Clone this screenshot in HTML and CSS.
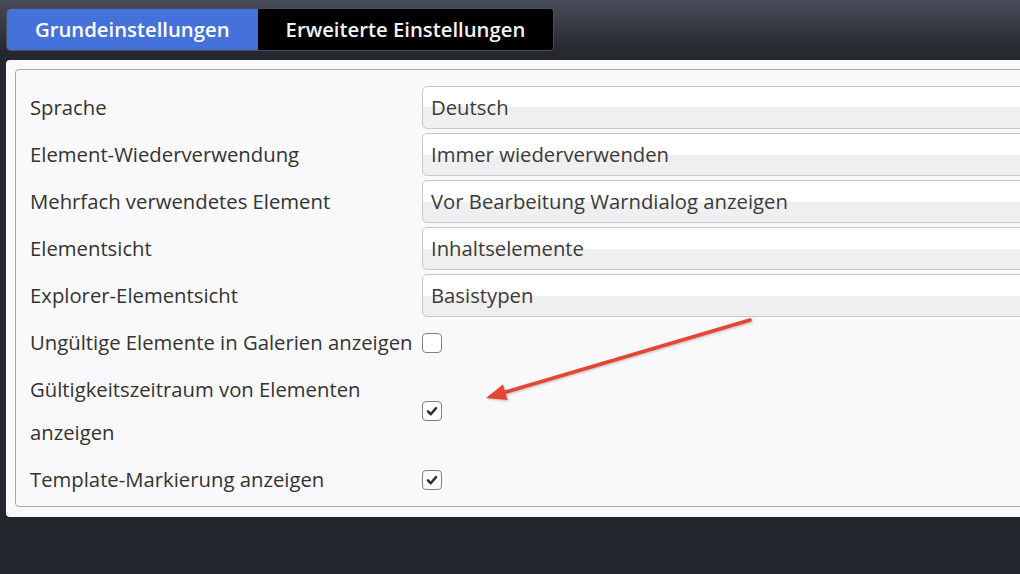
FILE: index.html
```html
<!DOCTYPE html>
<html lang="de">

<head>
    <meta charset="UTF-8">
    <title>Einstellungen</title>
    <link rel="stylesheet" href="styles.css">
</head>

<body>
    <div class="tabs">
        <div class="tab active">Grundeinstellungen</div>
        <div class="tab">Erweiterte Einstellungen</div>
    </div>

    <div class="panel">
        <div class="fieldset">
            <div class="settings">
                <div class="label">Sprache</div>
                <div class="field"><div class="select">Deutsch</div></div>

                <div class="label">Element-Wiederverwendung</div>
                <div class="field"><div class="select">Immer wiederverwenden</div></div>

                <div class="label">Mehrfach verwendetes Element</div>
                <div class="field"><div class="select">Vor Bearbeitung Warndialog anzeigen</div></div>

                <div class="label">Elementsicht</div>
                <div class="field"><div class="select">Inhaltselemente</div></div>

                <div class="label">Explorer-Elementsicht</div>
                <div class="field"><div class="select">Basistypen</div></div>

                <div class="label">Ungültige Elemente in Galerien anzeigen</div>
                <div class="field"><span class="checkbox"></span></div>

                <div class="label">Gültigkeitszeitraum von Elementen anzeigen</div>
                <div class="field">
                    <span class="checkbox">
                        <svg viewBox="0 0 20 20"><path d="M5.5 10.5 L8.6 13.6 L14.5 6.8" /></svg>
                    </span>
                </div>

                <div class="label">Template-Markierung anzeigen</div>
                <div class="field">
                    <span class="checkbox">
                        <svg viewBox="0 0 20 20"><path d="M5.5 10.5 L8.6 13.6 L14.5 6.8" /></svg>
                    </span>
                </div>
            </div>
        </div>
    </div>

    <!-- annotation arrow drawn over the form -->
    <svg class="arrow" viewBox="0 0 300 110">
        <line x1="270" y1="10" x2="25" y2="82.3" />
        <polygon points="6,88 27.5,90 22.9,74.6" />
    </svg>
</body>

</html>
```

FILE: styles.css
```css
body {
    margin: 0;
    position: relative;
    overflow: hidden;
    height: 574px;
    font-family: "Open Sans", "Noto Sans", sans-serif;
    background: linear-gradient(#474c59 0, #2b2e36 42px, #25272e 56px, #25272e 100%);
}

.tabs {
    display: inline-flex;
    margin: 8px 0 0 6px;
    background-color: #000;
    border: 1px solid #4a4d55;
    border-radius: 4px;
    overflow: hidden;
}

.tab {
    height: 41px;
    line-height: 41px;
    padding: 0 28px;
    font-size: 20.3px;
    font-weight: 600;
    color: #f2f2f2;
}

.tab.active {
    background-color: #4571da;
    color: #fff;
}

.panel {
    margin: 9px -40px 0 6px;
    padding: 9px 0 10px 9px;
    background-color: #f9f9fb;
    border-radius: 4px;
}

.fieldset {
    border: 1px solid #a8a8aa;
    border-radius: 4px;
    padding: 14px 0 3px 0;
}

.settings {
    display: grid;
    grid-template-columns: 406px 1fr;
}

.label {
    padding: 2px 0 2px 14px;
    line-height: 43px;
    font-size: 20.3px;
    color: #333;
}

.field {
    display: flex;
    align-items: center;
    padding: 2px 0;
}

.select {
    flex: 1;
    height: 41px;
    line-height: 41px;
    padding-left: 8px;
    font-size: 20.3px;
    color: #3a3a3a;
    border: 1px solid #c9c9cc;
    border-radius: 5px;
    background: linear-gradient(#fff 0, #fff 50%, #efeff1 50%, #efeff1 100%);
}

.checkbox {
    display: inline-block;
    width: 18px;
    height: 18px;
    border: 1.5px solid #808083;
    border-radius: 4px;
    background-color: #fff;
}

.checkbox svg {
    display: block;
    width: 18px;
    height: 18px;
}

.checkbox path {
    fill: none;
    stroke: #2e2e2e;
    stroke-width: 2.8;
    stroke-linecap: round;
    stroke-linejoin: round;
}

.arrow {
    position: absolute;
    left: 480px;
    top: 310px;
    width: 300px;
    height: 110px;
    filter: drop-shadow(1px 1px 1px rgba(0, 0, 0, 0.25));
}

.arrow line {
    stroke: #e6452f;
    stroke-width: 3.5;
    stroke-linecap: round;
}

.arrow polygon {
    fill: #e6452f;
}
```
